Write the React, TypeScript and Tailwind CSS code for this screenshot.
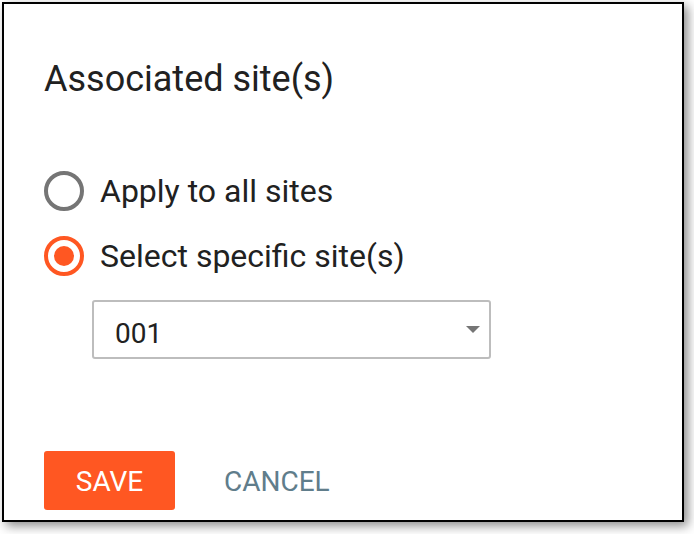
export default function App() {
  return (
    <div className="w-[694px] h-[534px] bg-white font-['Roboto',sans-serif] overflow-hidden">
      <div className="ml-[2px] mt-[2px] w-[682px] h-[520px] border-2 border-black bg-white shadow-[4px_4px_10px_rgba(0,0,0,0.45)] flex flex-col pl-[40px] pt-[54px]">
        <h1 className="text-[36px] leading-[42px] text-[#212121]">Associated site(s)</h1>

        <div className="mt-[71px] flex flex-col gap-[25px]">
          <label className="flex items-center gap-[16px] h-[40px]">
            <span className="w-[40px] h-[40px] rounded-full border-[4px] border-[#757575]" />
            <span className="text-[32px] leading-[40px] text-[#212121]">Apply to all sites</span>
          </label>
          <label className="flex items-center gap-[16px] h-[40px]">
            <span className="w-[40px] h-[40px] rounded-full border-[4px] border-[#ff5722] flex items-center justify-center">
              <span className="w-[20px] h-[20px] rounded-full bg-[#ff5722]" />
            </span>
            <span className="text-[32px] leading-[40px] text-[#212121]">Select specific site(s)</span>
          </label>
        </div>

        <div className="mt-[24px] ml-[48px] w-[399px] h-[59px] border-2 border-[#bdbdbd] rounded-[3px] flex items-center justify-between pl-[21px] pr-[9px]">
          <span className="text-[28px] leading-[32px] text-[#212121] pt-[9px]">001</span>
          <svg width="14" height="7" viewBox="0 0 14 7">
            <path d="M0 0 L14 0 L7 7 Z" fill="#757575" />
          </svg>
        </div>

        <div className="mt-[92px] flex items-center">
          <button className="w-[131px] h-[59px] bg-[#ff5722] rounded-[3px] text-white text-[28px] pt-[2px]">SAVE</button>
          <button className="ml-[49px] text-[28px] text-[#607d8b] pt-[2px]">CANCEL</button>
        </div>
      </div>
    </div>
  )
}
